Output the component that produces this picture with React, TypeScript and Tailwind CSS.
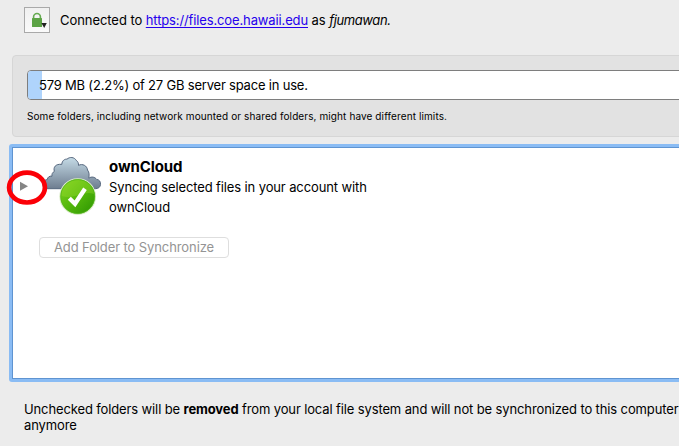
import React from "react";

function LockButton() {
  return (
    <button className="flex h-[26px] w-[26px] shrink-0 items-center justify-center border border-[#a9a9a9] bg-gradient-to-b from-[#f0f0f0] to-[#fafafa]">
      <svg width="24" height="24" viewBox="0 0 24 24">
        <path d="M8.6 11V8.8a3.4 3.3 0 0 1 6.8 0V11" fill="none" stroke="#65aa50" strokeWidth="1.6" />
        <rect x="7" y="10" width="10" height="9" rx="0.5" fill="#5ca345" />
        <path d="M16.4 15h5.4l-2.6 5z" fill="#222" />
      </svg>
    </button>
  );
}

function CloudStatus() {
  return (
    <svg width="60" height="60" viewBox="42 156 60 60" className="shrink-0">
      <defs>
        <linearGradient id="cloud" x1="0" y1="0" x2="0" y2="1">
          <stop offset="0" stopColor="#c5dbe6" />
          <stop offset="1" stopColor="#6e7d90" />
        </linearGradient>
        <linearGradient id="ok" x1="0" y1="0" x2="1" y2="1">
          <stop offset="0" stopColor="#82d51e" />
          <stop offset="0.5" stopColor="#55b80d" />
          <stop offset="1" stopColor="#299300" />
        </linearGradient>
      </defs>
      <path
        d="M46.5 188.7C42.8 188.2 42 184 43.8 181.4C44.8 179.9 46.2 179.7 47.3 179.5C47.6 177.2 49.5 175.7 52 176.2C51.6 174 52.5 172.3 54.4 171.4C53 167.5 55.5 163.6 61.8 164.4C62 160.4 65 158.8 67 159.2C69.5 156.6 74.5 157 76.2 160.4C78.2 161.5 78.5 163.5 78.5 165.4C82.5 163.2 87.2 165.8 87.5 170C89.5 172.5 89.2 175 88.8 178.2C91.5 176.2 95 177 96.6 179.4C99.4 179.6 100.7 181.8 100.5 184.3C100.4 187 98.5 188.7 95.5 188.7Z"
        fill="url(#cloud)"
        stroke="#56677e"
        strokeWidth="1"
      />
      <circle cx="77.7" cy="196.5" r="17.8" fill="url(#ok)" stroke="#dcecc9" strokeWidth="1.1" />
      <path d="M61.5 196C61 175 94 175 94 194C83 190 75 200 61.5 196Z" fill="#a1df35" opacity="0.32" />
      <circle cx="77.7" cy="196.5" r="17" fill="none" stroke="#52b41a" strokeWidth="0.7" />
      <path d="M69.3 198.3L75 203.8L85 188.8" fill="none" stroke="#fff" strokeWidth="4.3" />
    </svg>
  );
}

export default function App() {
  return (
    <main className="flex h-[446px] w-[679px] flex-col overflow-hidden bg-[#ececec] font-['Inter',sans-serif] text-[13px] whitespace-nowrap text-black">
      <header className="mt-[7px] flex h-[26px] items-center gap-[10px] pl-6">
        <LockButton />
        <p className="leading-5 tracking-[-0.06px]">
          Connected to <a href="https://files.coe.hawaii.edu" className="tracking-[-0.13px] text-[#2500ed] underline decoration-1 underline-offset-2 [text-decoration-skip-ink:none]">https://files.coe.hawaii.edu</a> as <em className="tracking-[-0.4px]">fjumawan.</em>
        </p>
      </header>

      <section className="mt-[22px] ml-3 h-[82px] w-[690px] shrink-0 rounded-[4px] border border-[#d6d6d6] bg-[#e2e2e2] pt-[14px] pl-[14px]">
        <div className="flex h-[30px] items-center overflow-hidden rounded-[4px] border border-[#7e7e7e] bg-white">
          <div className="h-full w-[14px] bg-[#afd4fc]" />
          <span className="-ml-[3px] leading-5 tracking-[-0.2px]">579 MB (2.2%) of 27 GB server space in use.</span>
        </div>
        <p className="mt-[8px] text-[10px] leading-4 tracking-[0.105px]">Some folders, including network mounted or shared folders, might have different limits.</p>
      </section>

      <section className="mt-[7px] ml-[9px] h-[238px] w-[690px] shrink-0 rounded-[3px] border-[3px] border-[#8abcf4]">
        <div className="h-full border border-[#5f94d1] bg-white">
          <div className="flex h-[68px] pt-2">
            <div className="relative flex w-[29px] shrink-0 pt-[25px] pl-[7px]">
              <svg width="9" height="11" viewBox="0 0 9 11"><path d="M0 0.8L8 5.3L0 9.8Z" fill="#858585" /></svg>
              <svg className="absolute top-[13px] -left-[7px] z-10" width="42" height="37" viewBox="0 0 42 37">
                <ellipse cx="21" cy="18.6" rx="17.9" ry="14.9" fill="none" stroke="#fb0007" strokeWidth="4.7" />
              </svg>
            </div>
            <CloudStatus />
            <div className="ml-[7px]">
              <h1 className="text-[15px] leading-[21px] font-bold tracking-[-0.1px]">ownCloud</h1>
              <p className="leading-5 tracking-[-0.12px]">Syncing selected files in your account with<br />ownCloud</p>
            </div>
          </div>
          <button className="mt-[21px] ml-[26px] flex h-[21px] w-[190px] items-center justify-center rounded-[4px] border border-[#dedede] bg-white text-[13px] tracking-[-0.1px] text-[#949494]">
            Add Folder to Synchronize
          </button>
        </div>
      </section>

      <p className="mt-[19px] ml-6 leading-4 tracking-[-0.125px]">
        Unchecked folders will be <strong>removed</strong> from your local file system and will not be synchronized to this computer<br />anymore
      </p>
    </main>
  );
}
